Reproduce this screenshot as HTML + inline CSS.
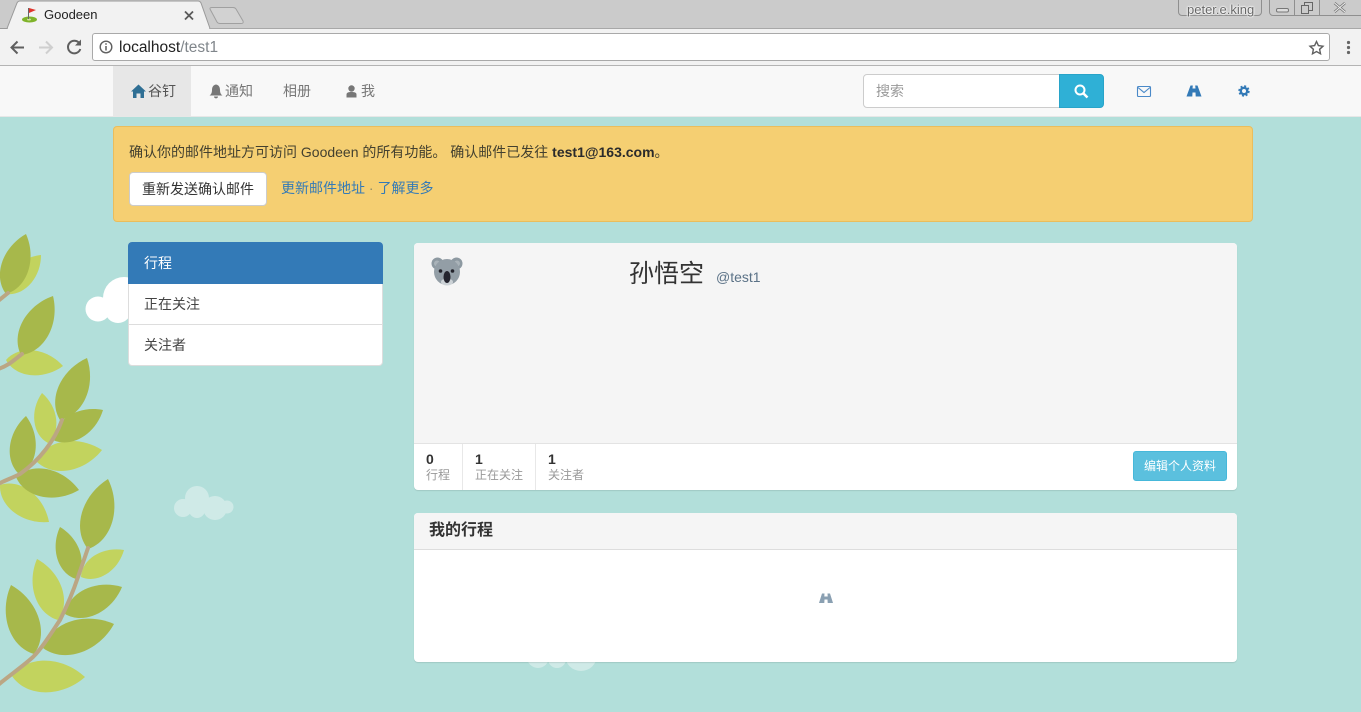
<!DOCTYPE html>
<html><head><meta charset="utf-8"><title>Goodeen</title>
<style>
html,body{margin:0;padding:0;width:1361px;height:712px;overflow:hidden;background:#b2dfda;font:14px/20px "Liberation Sans","Noto Sans CJK SC",sans-serif;color:#333}
.a{position:absolute;white-space:nowrap}
svg{position:absolute;overflow:visible}
a{color:#337ab7;text-decoration:none}
</style></head><body>

<!-- background art -->
<svg style="left:0;top:0" width="1361" height="712">
<defs><path id="leaf" d="M0,0 C20,-29 68,-29 100,0 C68,29 20,29 0,0Z"/></defs>
<g fill="#cfeae7">
<circle cx="183" cy="508" r="9"/><circle cx="197" cy="498" r="12"/><circle cx="215" cy="508" r="12"/><circle cx="227" cy="507" r="6.5"/><circle cx="197" cy="510" r="8"/>
<circle cx="538" cy="657" r="11"/><circle cx="557" cy="659" r="9"/><circle cx="581" cy="655" r="16"/>
</g>
<g fill="#fff"><circle cx="98" cy="309" r="12.5"/><circle cx="124" cy="298" r="21"/><circle cx="118" cy="310" r="13"/></g>
<g fill="#c2d35e">
<use href="#leaf" transform="matrix(.35,-.39,.39,.35,6,294)"/>
<use href="#leaf" transform="matrix(.57,.06,-.06,.57,6,360)"/>
<use href="#leaf" transform="matrix(-.06,-.5,.5,-.06,48,443)"/>
<use href="#leaf" transform="matrix(.66,-.11,.11,.66,36,461)"/>
<use href="#leaf" transform="matrix(.49,.37,-.37,.49,0,485)"/>
<use href="#leaf" transform="matrix(.43,-.27,.27,.43,81,577)"/>
<use href="#leaf" transform="matrix(-.21,-.61,.61,-.21,58,620)"/>
<use href="#leaf" transform="matrix(.73,.01,-.01,.73,12,676)"/>
</g>
<g fill="#a7b84b">
<use href="#leaf" transform="matrix(.2,-.6,.6,.2,6,294)"/>
<use href="#leaf" transform="matrix(.32,-.59,.59,.32,21,355)"/>
<use href="#leaf" transform="matrix(.27,-.62,.62,.27,60,420)"/>
<use href="#leaf" transform="matrix(.5,-.3,.3,.5,53,440)"/>
<use href="#leaf" transform="matrix(.06,-.59,.59,.06,20,475)"/>
<use href="#leaf" transform="matrix(.63,.13,-.13,.63,16,477)"/>
<use href="#leaf" transform="matrix(.2,-.7,.7,.2,88,549)"/>
<use href="#leaf" transform="matrix(-.16,-.52,.52,-.16,76,579)"/>
<use href="#leaf" transform="matrix(.57,-.27,.27,.57,65,614)"/>
<use href="#leaf" transform="matrix(.71,-.24,.24,.71,43,648)"/>
<use href="#leaf" transform="matrix(-.23,-.69,.69,-.23,34,654)"/>
</g>
<g fill="none" stroke="#bba683" stroke-linecap="round">
<path d="M-2,301 L8,293" stroke-width="4"/>
<path d="M-2,369 C8,366 14,360 22,354" stroke-width="4"/>
<path d="M62,420 C55,440 40,460 20,474 C12,478 6,480 -2,484" stroke-width="4"/>
<path d="M88,548 L78,577 C72,595 66,608 60,620 C50,635 42,648 33,657 C22,667 10,675 -2,685" stroke-width="4"/>
</g>
</svg>

<!-- browser chrome -->
<div class="a" style="left:0;top:0;width:1361px;height:29px;background:#cbcbcb"></div>
<div class="a" style="left:0;top:28px;width:1361px;height:38px;background:#f2f2f2;border-top:1px solid #a8a8a8;box-sizing:border-box"></div>
<div class="a" style="left:0;top:65px;width:1361px;height:1px;background:#b4b4b4"></div>
<svg style="left:0;top:0" width="260" height="30">
<path d="M0,28.500 H7 L17,3 Q18,1 20,1 H198 Q200,1 201,3 L210,28.500" fill="#f2f2f2" stroke="#9a9a9a" stroke-width="1"/>
<path d="M8,29 H209" stroke="#f2f2f2" stroke-width="1.500"/>
<path d="M210,28.500 H1361" stroke="#a8a8a8" stroke-width="1" fill="none"/>
<path d="M210,9 Q209.500,7.500 212,7.500 H233 Q235,7.500 236,9 L243,21 Q244,23.500 241,23.500 H220 Q218,23.500 217,22 Z" fill="#d2d2d2" stroke="#a0a0a0"/>
<ellipse cx="29.500" cy="19.500" rx="7.500" ry="3" fill="#7fb32a"/><ellipse cx="29" cy="19.500" rx="2" ry="1" fill="#cfe29a"/>
<path d="M28.500,19 V8" stroke="#666" stroke-width="1"/><path d="M29,8 L36,10 L29,13Z" fill="#e0342c"/>
<path d="M185,11.500 L193,19.500 M193,11.500 L185,19.500" stroke="#5a5a5a" stroke-width="1.800"/>
</svg>
<div class="a" style="left:44px;top:5px;font-size:13px;color:#222">Goodeen</div>

<svg style="left:0;top:30px" width="100" height="36">
<path d="M24,17.500 H12 M17.500,11.500 L11.500,17.500 L17.500,23.500" fill="none" stroke="#5f5f5f" stroke-width="2"/>
<path d="M39,17.500 H52 M46,11.500 L52,17.500 L46,23.500" fill="none" stroke="#cfcfcf" stroke-width="2"/>
<path d="M79.500,13.500 A6.300,6.300 0 1 0 80.300,19" fill="none" stroke="#5f5f5f" stroke-width="2"/>
<path d="M81,9.500 V15.500 H75Z" fill="#5f5f5f"/>
</svg>
<div class="a" style="left:92px;top:33px;width:1238px;height:28px;background:#fff;border:1px solid #a9a9a9;border-radius:3px;box-sizing:border-box"></div>
<svg style="left:98px;top:39px" width="18" height="18">
<circle cx="8" cy="8" r="5.800" fill="none" stroke="#5f5f5f" stroke-width="1.400"/>
<path d="M8,7 V11.500 M8,4.300 V5.800" stroke="#5f5f5f" stroke-width="1.500"/>
</svg>
<div class="a" style="left:119px;top:38px;font-size:15.500px;color:#222">localhost<span style="color:#80868b">/test1</span></div>
<svg style="left:1305px;top:38px" width="50" height="20">
<path d="M11.500,3.500 L13.400,7.600 L18,8.200 L14.600,11.300 L15.500,15.800 L11.500,13.500 L7.500,15.800 L8.400,11.300 L5,8.200 L9.600,7.600Z" fill="none" stroke="#5f5f5f" stroke-width="1.400"/>
<circle cx="43.500" cy="4.500" r="1.600" fill="#666"/><circle cx="43.500" cy="9.500" r="1.600" fill="#666"/><circle cx="43.500" cy="14.500" r="1.600" fill="#666"/>
</svg>

<!-- window controls -->
<div class="a" style="left:1178px;top:-4px;width:84px;height:20px;border:1px solid #8f8f8f;border-radius:4px;box-sizing:border-box"></div>
<div class="a" style="left:1187px;top:0;font-size:13px;line-height:20px;color:#666;text-shadow:0 0 2px #fff,0 0 2px #fff,0 0 1px #fff,0 0 1px #fff">peter.e.king</div>
<div class="a" style="left:1269px;top:-4px;width:100px;height:20px;border:1px solid #8f8f8f;border-radius:4px;box-sizing:border-box"></div>
<div class="a" style="left:1294px;top:0;width:1px;height:16px;background:#8f8f8f"></div>
<div class="a" style="left:1319px;top:0;width:1px;height:16px;background:#8f8f8f"></div>
<svg style="left:1270px;top:0" width="91" height="16">
<rect x="6.500" y="8.500" width="12" height="3.500" rx="1.500" fill="#ddd" stroke="#777"/>
<rect x="31.500" y="5.500" width="7" height="8" fill="none" stroke="#666"/>
<path d="M34.500,5.500 V2.500 H42.500 V10.500 H38.500" fill="none" stroke="#666"/>
<path d="M64.500,3 L75,12 M75,3 L64.500,12" stroke="#777" stroke-width="2.500"/>
<path d="M64.500,3 L75,12 M75,3 L64.500,12" stroke="#eee" stroke-width="1"/>
</svg>

<!-- navbar -->
<div class="a" style="left:0;top:66px;width:1361px;height:51px;background:#f8f8f8;border-bottom:1px solid #e7e7e7;box-sizing:border-box"></div>
<div class="a" style="left:113px;top:66px;width:78px;height:50px;background:#e7e7e7"></div>
<svg style="left:131px;top:84px" width="16" height="15"><path d="M7.500,0.500 L15,7.500 H13 V14 H9.500 V9.500 H5.500 V14 H2 V7.500 H0Z" fill="#2f6f94"/></svg>
<div class="a" style="left:148px;top:81px;color:#555">谷钉</div>
<svg style="left:209px;top:84px" width="14" height="15"><path d="M7,0.500 C10,1 11,3.500 11,6 C11,9 12,10.500 13.500,11.500 H0.500 C2,10.500 3,9 3,6 C3,3.500 4,1 7,0.500Z M5,12.500 H9 C9,15 5,15 5,12.500Z" fill="#777"/></svg>
<div class="a" style="left:225px;top:81px;color:#777">通知</div>
<div class="a" style="left:283px;top:81px;color:#777">相册</div>
<svg style="left:346px;top:85px" width="11" height="13"><circle cx="5.500" cy="3.500" r="3.200" fill="#777"/><path d="M0.500,12.500 V9.500 C0.500,7.500 2.500,7 5.500,7 C8.500,7 10.500,7.500 10.500,9.500 V12.500Z" fill="#777"/></svg>
<div class="a" style="left:361px;top:81px;color:#777">我</div>

<div class="a" style="left:863px;top:74px;width:197px;height:34px;background:#fff;border:1px solid #ccc;border-radius:4px 0 0 4px;box-sizing:border-box"></div>
<div class="a" style="left:876px;top:81px;color:#999;font-size:14px">搜索</div>
<div class="a" style="left:1059px;top:74px;width:45px;height:34px;background:#2fb0d6;border:1px solid #28a4c9;border-radius:0 4px 4px 0;box-sizing:border-box"></div>
<svg style="left:1074px;top:84px" width="15" height="15"><circle cx="6" cy="6" r="4.500" fill="none" stroke="#fff" stroke-width="2"/><path d="M9.500,9.500 L13.500,13.500" stroke="#fff" stroke-width="2.500"/></svg>
<svg style="left:1137px;top:85px" width="15" height="13"><rect x="0.500" y="1.500" width="13" height="10" rx="1" fill="none" stroke="#4a89c8" stroke-width="1.100"/><path d="M1,2.500 L7,7.500 L13,2.500" fill="none" stroke="#4a89c8" stroke-width="1.100"/></svg>
<svg style="left:1187px;top:85px" width="15" height="13"><path d="M3.500,0.500 H5.800 L5.500,3.500 H8.500 L8.200,0.500 H10.500 L14.500,11.500 H8.700 L8.500,7.500 H5.500 L5.300,11.500 H-0.500Z" fill="#337ab7"/></svg>
<svg style="left:1238px;top:85px" width="12" height="12"><circle cx="6" cy="6" r="3.200" fill="none" stroke="#337ab7" stroke-width="2.400"/><circle cx="6" cy="6" r="4.800" fill="none" stroke="#337ab7" stroke-width="1.800" stroke-dasharray="2 1.770"/></svg>

<!-- alert -->
<div class="a" style="left:113px;top:126px;width:1140px;height:96px;background:#f5cf72;border:1px solid #eabd5c;border-radius:4px;box-sizing:border-box"></div>
<div class="a" style="left:129px;top:142px;font-size:14px;color:#43402f">确认你的邮件地址方可访问 Goodeen 的所有功能。 确认邮件已发往 <b style="color:#2b2b2b">test1@163.com</b>。</div>
<div class="a" style="left:129px;top:172px;width:138px;height:34px;background:#fff;border:1px solid #ccc;border-radius:4px;box-sizing:border-box;text-align:center;line-height:32px;font-size:14px;color:#333">重新发送确认邮件</div>
<div class="a" style="left:281px;top:178px;font-size:14px;color:#8a8a6a"><a href="#">更新邮件地址</a> · <a href="#">了解更多</a></div>

<!-- sidebar -->
<div class="a" style="left:128px;top:242px;width:255px;height:124px;background:#fff;border:1px solid #ddd;border-radius:4px;box-sizing:border-box"></div>
<div class="a" style="left:128px;top:242px;width:255px;height:42px;background:#337ab7;border-radius:4px 4px 0 0;color:#fff;line-height:42px;text-indent:16px;font-size:14px">行程</div>
<div class="a" style="left:144px;top:294px;font-size:14px;color:#444">正在关注</div>
<div class="a" style="left:129px;top:324px;width:253px;height:1px;background:#ddd"></div>
<div class="a" style="left:144px;top:335px;font-size:14px;color:#444">关注者</div>

<!-- profile card -->
<div class="a" style="left:414px;top:243px;width:823px;height:247px;background:#fff;border-radius:4px;box-shadow:0 1px 1px rgba(0,0,0,.1)"></div>
<div class="a" style="left:414px;top:243px;width:823px;height:200px;background:#f5f5f5;border-radius:4px 4px 0 0"></div>
<div class="a" style="left:414px;top:443px;width:823px;height:1px;background:#e3e3e3"></div>
<svg style="left:431px;top:256px" width="32" height="30">
<circle cx="6.500" cy="7.500" r="6" fill="#8d99a1"/><circle cx="25.500" cy="7.500" r="6" fill="#8d99a1"/>
<circle cx="6" cy="7.500" r="3" fill="#aab3b9"/><circle cx="26" cy="7.500" r="3" fill="#aab3b9"/>
<circle cx="16" cy="16" r="13" fill="#939ea6"/>
<ellipse cx="16" cy="26" rx="6" ry="3.500" fill="#ccd2d6"/>
<ellipse cx="16" cy="21" rx="3.500" ry="6" fill="#24242e"/>
<circle cx="9.500" cy="15" r="1.800" fill="#22222a"/><circle cx="21.500" cy="15" r="1.800" fill="#22222a"/>
</svg>
<div class="a" style="left:629px;top:258px;font-size:25px;line-height:32px;color:#333">孙悟空</div>
<div class="a" style="left:716px;top:267px;font-size:14px;color:#5b7287">@test1</div>
<div class="a" style="left:462px;top:444px;width:1px;height:46px;background:#e8e8e8"></div>
<div class="a" style="left:535px;top:444px;width:1px;height:46px;background:#e8e8e8"></div>
<div class="a" style="left:426px;top:449px;font-weight:bold;font-size:14px;color:#333">0</div>
<div class="a" style="left:426px;top:465px;font-size:12px;color:#999">行程</div>
<div class="a" style="left:475px;top:449px;font-weight:bold;font-size:14px;color:#333">1</div>
<div class="a" style="left:475px;top:465px;font-size:12px;color:#999">正在关注</div>
<div class="a" style="left:548px;top:449px;font-weight:bold;font-size:14px;color:#333">1</div>
<div class="a" style="left:548px;top:465px;font-size:12px;color:#999">关注者</div>
<div class="a" style="left:1133px;top:451px;width:94px;height:30px;background:#5bc0de;border:1px solid #46b8da;border-radius:3px;box-sizing:border-box;color:#fff;font-size:12px;line-height:28px;text-align:center">编辑个人资料</div>

<!-- timeline card -->
<div class="a" style="left:414px;top:513px;width:823px;height:149px;background:#fff;border-radius:4px;box-shadow:0 1px 1px rgba(0,0,0,.1)"></div>
<div class="a" style="left:414px;top:513px;width:823px;height:36px;background:#f5f5f5;border-bottom:1px solid #ddd;border-radius:4px 4px 0 0"></div>
<div class="a" style="left:429px;top:521px;font-size:16px;font-weight:bold;color:#333">我的行程</div>
<svg style="left:819px;top:593px" width="14" height="11"><path d="M3,0.500 H5.500 L5.300,3.500 H8.700 L8.500,0.500 H11 L14,10 H8.700 L8.500,6.500 H5.500 L5.300,10 H0Z" fill="#8aa0b2"/></svg>

</body></html>
